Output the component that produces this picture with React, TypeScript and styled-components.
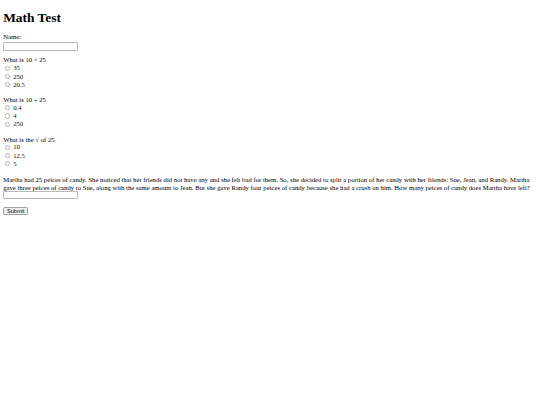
import { FC } from 'react';
import styled, { createGlobalStyle } from 'styled-components';

const GlobalStyle = createGlobalStyle`
  html {
    background: #fff;
  }
  body {
    margin: 3.2px;
    font-family: 'Liberation Serif', 'Times New Roman', serif;
    font-size: 6.7px;
    line-height: 7.7px;
    color: #000;
  }
`;

const Title = styled.h1`
  margin: 6.6px 0 8px;
  font-size: 13.4px;
  line-height: 15.4px;
  font-weight: bold;
`;

const Form = styled.form`
  display: flex;
  flex-direction: column;
  align-items: flex-start;
`;

const FieldLabel = styled.label`
  display: block;
`;

const TextInput = styled.input`
  box-sizing: border-box;
  width: 75px;
  height: 8.4px;
  margin: 1.4px 0 0;
  padding: 0 1px;
  border: 1px solid #b9b9b9;
  border-radius: 1px;
  background: #fff;
  font-size: 5.3px;
`;

const AnswerInput = styled(TextInput)`
  height: 8px;
  margin-top: 0;
`;

const Question = styled.div<{ $first?: boolean }>`
  display: flex;
  flex-direction: column;
  margin-top: ${(p) => (p.$first ? '5.8px' : '7.2px')};
`;

const Prompt = styled.div`
  line-height: 7.5px;
`;

const Option = styled.label`
  display: flex;
  align-items: center;
  height: 8.3px;
`;

const Radio = styled.input`
  appearance: none;
  box-sizing: border-box;
  width: 5.2px;
  height: 5.2px;
  margin: 0 1.2px 0 2px;
  border: 1px solid #b4b4b4;
  border-radius: 50%;
  background: #fff;
`;

const OptionText = styled.span`
  padding-left: 1.6px;
  color: #111;
`;

const Story = styled.p`
  margin: 7.6px 0 0;
  line-height: 7.9px;
`;

const SubmitButton = styled.button`
  box-sizing: border-box;
  width: 25px;
  height: 8px;
  margin-top: 7.3px;
  padding: 0;
  border: 1px solid #a2a2a2;
  border-radius: 1.2px;
  background: #efefef;
  font-family: 'Liberation Sans', Arial, sans-serif;
  font-size: 5.6px;
  line-height: 6px;
  color: #000;
`;

const questions = [
  { name: 'q1', prompt: 'What is 10 × 25', options: ['35', '250', '20.5'] },
  { name: 'q2', prompt: 'What is 10 ÷ 25', options: ['0.4', '4', '250'] },
  { name: 'q3', prompt: 'What is the √ of 25', options: ['10', '12.5', '5'] },
];

const App: FC = () => {
  return (
    <>
      <GlobalStyle />
      <Title>Math Test</Title>
      <Form onSubmit={(e) => e.preventDefault()}>
        <FieldLabel htmlFor="name">Name:</FieldLabel>
        <TextInput id="name" type="text" />
        {questions.map((q, i) => (
          <Question key={q.name} $first={i === 0}>
            <Prompt>{q.prompt}</Prompt>
            {q.options.map((opt) => (
              <Option key={opt}>
                <Radio type="radio" name={q.name} value={opt} />
                <OptionText>{opt}</OptionText>
              </Option>
            ))}
          </Question>
        ))}
        <Story>
          Martha had 25 peices of candy. She noticed that her friends did not
          have any and she felt bad for them. So, she decided to split a portion
          of her candy with her friends: Sue, Jean, and Randy. Martha gave three
          peices of candy to Sue, along with the same amount to Jean. But she
          gave Randy four peices of candy because she had a crush on him. How
          many peices of candy does Martha have left?
        </Story>
        <AnswerInput type="text" />
        <SubmitButton type="submit">Submit</SubmitButton>
      </Form>
    </>
  );
};

export default App;
